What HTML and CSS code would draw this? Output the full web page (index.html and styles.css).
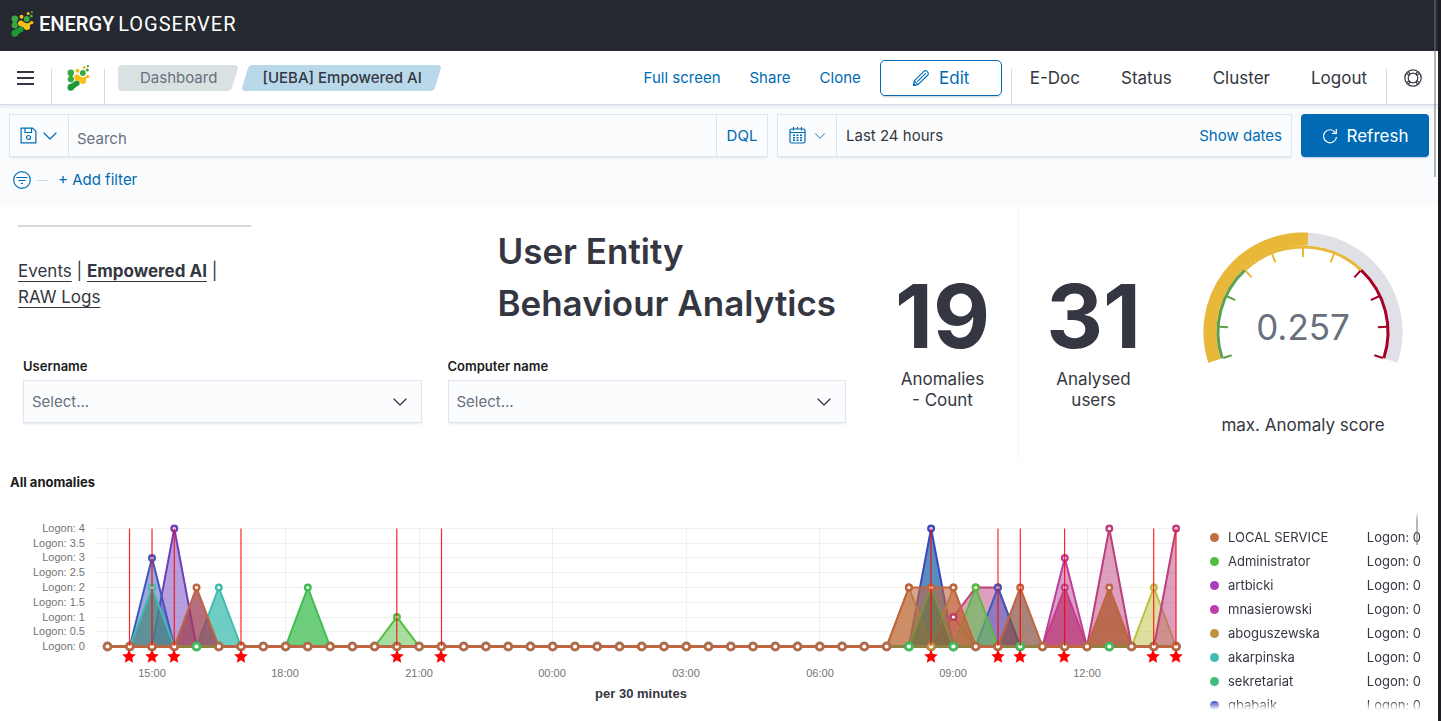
FILE: index.html
```html
<!DOCTYPE html>
<html lang="en">
<head>
<meta charset="utf-8">
<meta name="viewport" content="width=device-width, initial-scale=1">
<title>[UEBA] Empowered AI</title>
<link rel="stylesheet" href="styles.css">
</head>
<body>
<svg class="defs" aria-hidden="true">
  <symbol id="logo" viewBox="0 0 22 26">
    <g fill="#3aa845"><circle cx="3.3" cy="7.8" r="3.3"/><circle cx="3.3" cy="14.3" r="3.1"/><path d="M1.5 9h3.6v5H1.5z"/><circle cx="15.3" cy="8" r="2.9"/><circle cx="19.8" cy="5" r="1.6"/><circle cx="20.4" cy="1.2" r="1.1"/></g>
    <g fill="#1e9a35"><circle cx="3.3" cy="22.4" r="3.3"/><circle cx="9.3" cy="18.2" r="2.8"/><path d="M2 19.6l6-3.6 2.8 4.6-5.8 4z"/></g>
    <g fill="#f6c217"><circle cx="10" cy="5.7" r="2"/><circle cx="16.7" cy="2.4" r="1.5"/><circle cx="9.4" cy="12.4" r="2.8"/><circle cx="15.4" cy="15.7" r="3.2"/><circle cx="20.2" cy="11.6" r="1.7"/><path d="M9 9.8l7 3-1 5.2-6.600-3.400zM15 13l5-2.500.8 2-4.500 3z"/></g>
  </symbol>
  <symbol id="chevron" viewBox="0 0 16 16"><path d="M2 5l6 6 6-6" fill="none" stroke="currentColor" stroke-width="1.200" stroke-linecap="round" stroke-linejoin="round"/></symbol>
</svg>

<div class="page">
  <div class="page-scroll"></div>
  <header class="brand">
    <svg class="brand-icon"><use href="#logo"/></svg>
    <span class="brand-name"><b>ENERGY</b><span>LOGSERVER</span></span>
  </header>

  <nav class="nav">
    <button class="nav-cell" aria-label="Menu"><svg width="17" height="14" viewBox="0 0 17 14" stroke="#343741" stroke-width="2"><path d="M0 1h17M0 7h17M0 13h17"/></svg></button>
    <i class="sep"></i>
    <a class="nav-cell nav-home" href="#" aria-label="Home"><svg class="brand-icon"><use href="#logo"/></svg></a>
    <i class="sep"></i>
    <div class="crumbs">
      <a class="crumb crumb-first" href="#">Dashboard</a>
      <span class="crumb crumb-last">[UEBA] Empowered AI</span>
    </div>
    <div class="actions">
      <a href="#">Full screen</a><a href="#">Share</a><a href="#">Clone</a>
    </div>
    <button class="edit"><svg width="18" height="18" viewBox="0 0 18 18" fill="none" stroke="currentColor" stroke-width="1.100" stroke-linejoin="round"><path d="M1.500 16.500l.8-4.600L12 2.200a1.900 1.900 0 0 1 2.700 0l1.100 1.100a1.900 1.900 0 0 1 0 2.700L6.100 15.700zM2.300 11.900l3.800 3.800M5.300 12.700l8.500-8.500"/><path d="M1.500 16.500l.3-2 1.700 1.700z" fill="currentColor"/></svg>Edit</button>
    <i class="sep"></i>
    <div class="links">
      <a href="#">E-Doc</a><a href="#">Status</a><a href="#">Cluster</a><a href="#">Logout</a>
    </div>
    <i class="sep"></i>
    <button class="nav-cell" aria-label="Help"><svg width="18" height="18" viewBox="0 0 18 18" fill="none" stroke="#343741" stroke-width="1.200"><circle cx="9" cy="9" r="8.200"/><circle cx="9" cy="9" r="4.800"/><path d="M2.600 4.400l2.600 1.800M4.400 2.600l1.800 2.600M15.400 4.400l-2.600 1.800M13.600 2.600l-1.800 2.600M2.600 13.600l2.600-1.800M4.400 15.400l1.800-2.600M15.400 13.600l-2.600-1.800M13.600 15.400l-1.800-2.600"/></svg></button>
  </nav>

  <section class="query">
    <div class="query-bar">
      <div class="search-box">
        <button class="pick" aria-label="Saved queries"><svg width="17" height="17" viewBox="0 0 17 17" fill="none" stroke="currentColor" stroke-width="1.200"><path d="M1.100 1.100h11.500l3.300 3.300v11.500H1.100zM5 1.100v4.400h6.500V1.100"/><circle cx="8.500" cy="10.500" r="2"/></svg><svg width="16" height="16"><use href="#chevron"/></svg></button>
        <input type="text" placeholder="Search" aria-label="Search">
        <button class="dql">DQL</button>
      </div>
      <div class="date-box">
        <button class="pick" aria-label="Date quick select"><svg width="17" height="17" viewBox="0 0 17 17" fill="none" stroke="currentColor" stroke-width="1.200"><rect x="1" y="2" width="15" height="14" rx="1.500"/><path d="M1 5.500h15M4.500 0v3.500M8.500 0v2M12.500 0v3.500"/><path d="M4 8.300h9M4 10.800h9M4 13.300h9" stroke-width="1.400" stroke-dasharray="2 1.500"/></svg><svg width="12" height="12"><use href="#chevron"/></svg></button>
        <span class="range">Last 24 hours</span>
        <a href="#">Show dates</a>
      </div>
      <button class="refresh"><svg width="16" height="16" viewBox="0 0 16 16" fill="none" stroke="currentColor" stroke-width="1.200"><path d="M13.200 4.300A6.500 6.500 0 1 0 14.500 9M14.300 1v4.300H10"/></svg>Refresh</button>
    </div>
    <div class="filters">
      <button class="filter-icon" aria-label="Filter options"><svg width="18" height="18" viewBox="0 0 18 18" fill="none" stroke="currentColor" stroke-width="1.200"><circle cx="9" cy="9" r="8.300"/><path d="M3.500 6.500h11M5.500 9.500h7M8 12.500h2"/></svg></button>
      <i class="dash"></i>
      <a href="#">+ Add filter</a>
    </div>
  </section>

  <main>
    <section class="overview">
      <div class="left">
        <div class="intro">
          <p class="tabs"><a href="#">Events</a> | <a href="#"><b>Empowered AI</b></a> | <a href="#">RAW Logs</a></p>
          <h1>User Entity<br>Behaviour Analytics</h1>
        </div>
        <div class="controls">
          <div class="field">
            <label for="user">Username</label>
            <div class="select"><select id="user"><option>Select...</option></select><svg width="16" height="16"><use href="#chevron"/></svg></div>
          </div>
          <div class="field">
            <label for="computer">Computer name</label>
            <div class="select"><select id="computer"><option>Select...</option></select><svg width="16" height="16"><use href="#chevron"/></svg></div>
          </div>
        </div>
      </div>
      <div class="metric"><strong>19</strong><span>Anomalies<br>- Count</span></div>
      <div class="metric"><strong>31</strong><span>Analysed<br>users</span></div>
      <div class="gauge">
        <svg width="200" height="134" viewBox="0 0 200 134" fill="none">
          <path d="M11.550 128.740A93 93 0 1 1 188.450 128.740" stroke="#e0e1e6" stroke-width="13"/>
          <path d="M11.550 128.740A93 93 0 0 1 104.870 7.130" stroke="#e9b838" stroke-width="13"/>
          <path d="M19.160 126.270A85 85 0 0 1 41.800 38.040" stroke="#5fa04e" stroke-width="3"/>
          <path d="M41.800 38.040A85 85 0 0 1 158.200 38.040" stroke="#e9b838" stroke-width="3"/>
          <path d="M158.200 38.040A85 85 0 0 1 180.840 126.270" stroke="#a50026" stroke-width="3"/>
          <g stroke-width="2">
            <g stroke="#5fa04e"><path d="M16 100h9" transform="rotate(-18 100 100)"/><path d="M16 100h9" transform="rotate(3.600 100 100)"/><path d="M16 100h9" transform="rotate(25.200 100 100)"/></g>
            <g stroke="#e9b838"><path d="M16 100h9" transform="rotate(46.800 100 100)"/><path d="M16 100h9" transform="rotate(68.400 100 100)"/><path d="M16 100h9" transform="rotate(90 100 100)"/><path d="M16 100h9" transform="rotate(111.600 100 100)"/></g>
            <g stroke="#a50026"><path d="M16 100h9" transform="rotate(133.200 100 100)"/><path d="M16 100h9" transform="rotate(154.800 100 100)"/><path d="M16 100h9" transform="rotate(176.400 100 100)"/><path d="M16 100h9" transform="rotate(198 100 100)"/></g>
          </g>
          <text x="100" y="108" class="gauge-value">0.257</text>
        </svg>
        <span>max. Anomaly score</span>
      </div>
    </section>

    <h2>All anomalies</h2>
    <section class="anomalies">
      <svg class="chart" viewBox="0 0 1200 206" role="img" aria-label="All anomalies per 30 minutes">
        <defs>
          <marker id="dot" viewBox="0 0 10 10" markerWidth="10" markerHeight="10" refX="5" refY="5" markerUnits="userSpaceOnUse"><circle cx="5" cy="5" r="2.800" fill="#fff" stroke="context-stroke" stroke-width="2.400"/></marker>
          <marker id="base" viewBox="0 0 12 12" markerWidth="12" markerHeight="12" refX="6" refY="6" markerUnits="userSpaceOnUse"><circle cx="6" cy="6" r="4.900" fill="#7d8060"/><circle cx="6" cy="6" r="3.200" fill="#fff" stroke="#bf6540" stroke-width="2.300"/></marker>
          <path id="star" d="M0-7l2 4.500 4.800.5-3.600 3.300 1 4.900L0 3.700l-4.200 2.500 1-4.900L-6.800-2l4.800-.5z" fill="#f00"/>
          <g id="green"><circle r="4.800" fill="#3fbe5f"/><circle r="2.100" fill="#fff"/></g>
        </defs>
        <g stroke="#f0f0f0" fill="none">
          <path d="M97 23.500H1176M97 38.500H1176M97 52.500H1176M97 67.500H1176M97 82.500H1176M97 97.500H1176M97 112.500H1176M97 126.500H1176M97 141.500H1176"/>
          <path d="M107.500 23V153M152.500 23V153M285.500 23V153M419.500 23V153M552.500 23V153M686.500 23V153M819.500 23V153M953.500 23V153M1087.500 23V153"/>
        </g>
        <g class="series" fill-opacity=".5">
          <polyline points="152,141.500 174.300,23.500 196.500,141.500" stroke="#6f3fbe" fill="#6f3fbe"/>
          <polyline points="129.800,141.500 152,53 174.300,141.500" stroke="#3f57be" fill="#3f57be"/>
          <polyline points="129.800,141.500 152,82.500 174.300,141.500" stroke="#3fbeaf" fill="#4a8880" fill-opacity=".75"/>
          <polyline points="196.500,141.500 218.800,82.500 241,141.500" stroke="#3fbeaf" fill="#3fbeaf" fill-opacity=".75"/>
          <polyline points="174.300,141.500 196.500,82.500 218.800,141.500" stroke="#bf6540" fill="#9f3f55" fill-opacity=".75"/>
          <polyline points="285.600,141.500 307.800,82.500 330.100,141.500" stroke="#3fbe52" fill="#3fbe52" fill-opacity=".75"/>
          <polyline points="374.700,141.500 396.900,112 419.200,141.500" stroke="#52be3f" fill="#52be3f"/>
          <polyline points="908.900,141.500 931.100,23.500 953.400,141.500" stroke="#3f46be" fill="#2067a8" fill-opacity=".75"/>
          <polyline points="931.100,141.500 953.400,112 975.700,82.500 997.900,82.500 1020.200,141.500" stroke="#be3f7d" fill="#be3f7d"/>
          <polyline points="953.400,112 975.700,141.500" stroke="#be3f5f" fill="none"/>
          <polyline points="975.700,141.500 997.900,82.500 1020.200,141.500" stroke="#3f57be" fill="#3f57be"/>
          <polyline points="953.400,141.500 975.700,82.500 997.900,141.500" stroke="#52be3f" fill="#66be55" fill-opacity=".65"/>
          <polyline points="886.600,141.500 908.900,82.500 931.100,141.500" stroke="#be983f" fill="#be983f"/>
          <polyline points="931.100,141.500 953.400,82.500 975.700,141.500" stroke="#be983f" fill="#be653f"/>
          <polyline points="886.600,141.500 908.900,82.500 931.100,82.500 953.400,82.500 975.700,141.500" stroke="#bf6540" fill="#bf6540" fill-opacity=".6"/>
          <polyline points="908.900,141.500 931.100,82.500 953.400,141.500" stroke="#7f903f" fill="#55723f"/>
          <circle cx="908.900" cy="82.500" r="2.800" fill="#fff" fill-opacity="1" stroke="#bf6540" stroke-width="2.400"/><circle cx="931.100" cy="82.500" r="2.800" fill="#fff" fill-opacity="1" stroke="#bf6540" stroke-width="2.400"/>
          <circle cx="953.400" cy="112" r="2.800" fill="#fff" fill-opacity="1" stroke="#be3f5f" stroke-width="2.400"/>
          <polyline points="997.900,141.500 1020.200,82.500 1042.500,141.500" stroke="#bf6540" fill="#835040" fill-opacity=".7"/>
          <polyline points="1042.500,141.500 1064.800,53 1087,141.500" stroke="#be3f98" fill="#be3f98"/>
          <polyline points="1042.500,141.500 1064.800,82.500 1087,141.500" stroke="#be3f8a" fill="#b8306d" fill-opacity=".7"/>
          <polyline points="1087,141.500 1109.300,23.500 1131.600,141.500" stroke="#be3f7d" fill="#be3f7d"/>
          <polyline points="1087,141.500 1109.300,82.500 1131.600,141.500" stroke="#bf6540" fill="#b05c36" fill-opacity=".8"/>
          <polyline points="1131.600,141.500 1153.900,82.500 1176.100,141.500" stroke="#bebe3f" fill="#bebe3f"/>
          <polyline class="rising" points="1153.900,141.500 1176.100,23.500" stroke="#be3f7d" fill="none"/>
          <polygon points="1153.900,141.500 1176.100,23.500 1176.100,141.500" fill="#be3f7d"/>
        </g>
        <polyline class="baseline" points="107.500,141.500 129.800,141.500 152,141.500 174.300,141.500 196.500,141.500 218.800,141.500 241,141.500 263.300,141.500 285.600,141.500 307.800,141.500 330.100,141.500 352.400,141.500 374.600,141.500 396.900,141.500 419.100,141.500 441.400,141.500 463.700,141.500 485.900,141.500 508.200,141.500 530.400,141.500 552.700,141.500 575,141.500 597.200,141.500 619.500,141.500 641.700,141.500 664,141.500 686.300,141.500 708.500,141.500 730.800,141.500 753,141.500 775.300,141.500 797.600,141.500 819.800,141.500 842.100,141.500 864.300,141.500 886.600,141.500 908.900,141.500 931.100,141.500 953.400,141.500 975.700,141.500 997.900,141.500 1020.200,141.500 1042.500,141.500 1064.700,141.500 1087,141.500 1109.300,141.500 1131.500,141.500 1153.800,141.500 1176.100,141.500"/>
        <path d="M179 141.500h35M891 141.500h35M936 141.500h35M1003 141.500h35M1092 141.500h35" stroke="#7c8d3f" stroke-width="2"/>
        <use href="#green" x="196.500" y="141.500"/><use href="#green" x="908.900" y="141.500"/><use href="#green" x="953.400" y="141.500"/><use href="#green" x="1020.200" y="141.500"/><use href="#green" x="1109.300" y="141.500"/>
        <circle cx="931.100" cy="141.500" r="3" fill="#fff" stroke="#be983f" stroke-width="2"/>
        <path d="M129.500 23.500V141M152 23.500V141M174.300 23.500V141M241 23.500V141M396.800 23.500V141M441.500 23.500V141M931 23.500V141M998 23.500V141M1020.300 23.500V141M1064.600 23.500V141M1153.700 23.500V141M1176 23.500V141" stroke="#f00" stroke-opacity=".85" stroke-width="1.200"/>
        <use href="#star" x="129" y="151.500"/><use href="#star" x="152" y="151.500"/><use href="#star" x="174" y="151.500"/><use href="#star" x="241" y="151.500"/><use href="#star" x="397" y="151.500"/><use href="#star" x="441" y="151.500"/><use href="#star" x="931" y="151.500"/><use href="#star" x="998" y="151.500"/><use href="#star" x="1020" y="151.500"/><use href="#star" x="1064" y="151.500"/><use href="#star" x="1153" y="151.500"/><use href="#star" x="1176" y="151.500"/>
        <g class="y-labels">
          <text x="85" y="27">Logon: 4</text><text x="85" y="42">Logon: 3.5</text><text x="85" y="56">Logon: 3</text><text x="85" y="71">Logon: 2.5</text><text x="85" y="86">Logon: 2</text><text x="85" y="101">Logon: 1.5</text><text x="85" y="116">Logon: 1</text><text x="85" y="130">Logon: 0.5</text><text x="85" y="145">Logon: 0</text>
        </g>
        <g class="x-labels">
          <text x="152" y="172">15:00</text><text x="285" y="172">18:00</text><text x="419" y="172">21:00</text><text x="552" y="172">00:00</text><text x="686" y="172">03:00</text><text x="820" y="172">06:00</text><text x="953" y="172">09:00</text><text x="1087" y="172">12:00</text>
        </g>
        <text class="x-title" x="641" y="193">per 30 minutes</text>
      </svg>
      <ul class="legend">
        <li><i class="c1"></i><span>LOCAL SERVICE</span><span>Logon: 0</span></li>
        <li><i class="c2"></i><span>Administrator</span><span>Logon: 0</span></li>
        <li><i class="c3"></i><span>artbicki</span><span>Logon: 0</span></li>
        <li><i class="c4"></i><span>mnasierowski</span><span>Logon: 0</span></li>
        <li><i class="c5"></i><span>aboguszewska</span><span>Logon: 0</span></li>
        <li><i class="c6"></i><span>akarpinska</span><span>Logon: 0</span></li>
        <li><i class="c7"></i><span>sekretariat</span><span>Logon: 0</span></li>
        <li><i class="c8"></i><span>gbabaik</span><span>Logon: 0</span></li>
      </ul>
    </section>
  </main>
</div>
</body>
</html>
```

FILE: styles.css
```css
* { box-sizing: border-box; }
body {
  margin: 0;
  background: #fff;
  color: #343741;
  font: 15px/20px Inter, "Liberation Sans", sans-serif;
}
a { color: #006bb4; text-decoration: none; }
button, input, select { font: inherit; color: inherit; background: none; border: 0; margin: 0; padding: 0; border-radius: 0; }
button svg { flex: none; }
.defs { position: absolute; width: 0; height: 0; }
.page { position: relative; min-height: 100vh; border-right: 3px solid #1d1e24; }
.page-scroll { position: absolute; z-index: 2; top: 0; right: 2px; width: 2px; height: 177px; background: rgba(105, 112, 125, .5); }

.brand { display: flex; align-items: center; gap: 5px; height: 51px; padding: 0 11px 3px; background: #25282f; color: #fff; }
.brand-icon { display: block; width: 23px; height: 26px; }
.brand-name { display: flex; gap: 4px; font: 20px/24px Roboto, sans-serif; }
.brand-name b { font-weight: 500; }
.brand-name span { letter-spacing: 1px; }

.nav { display: flex; align-items: center; height: 54px; border-bottom: 1px solid #d3dae6; box-shadow: 0 2px 3px rgba(152, 162, 179, .2); position: relative; }
.nav-cell { display: flex; align-items: center; justify-content: center; width: 51px; height: 100%; flex: none; }
.nav-home { width: 52px; }
.sep { width: 1px; height: 35px; align-self: flex-end; background: #d3dae6; flex: none; }
.crumbs { display: flex; gap: 2px; margin-left: 13px; }
.crumb { position: relative; z-index: 0; padding: 3px 22px; height: 26px; line-height: 20px; color: #69707d; white-space: nowrap; }
.crumb::before, .crumb-first::after { content: ""; position: absolute; z-index: -1; inset: 0 4px; border-radius: 4px; background: #d9e1e2; transform: skewX(-17deg); }
.crumb-first::after { inset: 0 20px 0 0; transform: none; }
.crumb-last { padding: 3px 21px; color: #343741; font-weight: 500; }
.crumb-last::before { background: #b9d9eb; }
.actions { display: flex; gap: 29px; margin-left: auto; white-space: nowrap; }
.edit { display: flex; align-items: center; justify-content: center; gap: 9px; width: 122px; height: 36px; margin: 0 9px 0 19px; border: 1px solid #006bb4; border-radius: 5px; color: #006bb4; font-size: 17px; box-shadow: 0 2px 2px -1px rgba(54, 97, 126, .3); }
.links { display: flex; gap: 41px; padding: 0 19px 0 18px; font-size: 17px; }
.links a { color: #343741; }

.query { padding: 9px 9px 0; height: 101px; background: #fafbfd; }
.query-bar { display: grid; grid-template-columns: 759fr 515fr 128px; gap: 9px; height: 43px; }
.search-box, .date-box { display: flex; align-items: center; min-width: 0; border: 1px solid #e0e4ee; background: #fbfcfd; box-shadow: 0 2px 2px -1px rgba(152, 162, 179, .25); }
.date-box { padding-right: 9px; }
.pick { display: flex; align-items: center; justify-content: center; gap: 5px; width: 59px; height: 100%; flex: none; border-right: 1px solid #e0e4ee; color: #006bb4; }
.date-box .pick { gap: 8px; }
.search-box input { flex: 1; min-width: 0; height: 100%; padding: 6px 8px 0; outline: 0; }
.search-box input::placeholder { color: #69707d; opacity: 1; }
.dql { width: 51px; height: 100%; border-left: 1px solid #e0e4ee; color: #006bb4; }
.range { flex: 1; padding-left: 9px; }
.refresh { display: flex; align-items: center; justify-content: center; gap: 9px; border-radius: 4px; background: #006bb4; color: #fff; font-size: 17px; box-shadow: 0 2px 2px -1px rgba(54, 97, 126, .3); }
.filters { display: flex; align-items: center; height: 46px; padding-left: 4px; }
.filter-icon { display: flex; color: #006bb4; }
.dash { width: 11px; height: 1px; margin: 0 10px 0 6px; background: #d3dae6; }

.overview { display: grid; grid-template-columns: 867fr 151fr 150fr 270fr; height: 256px; }
.intro { display: grid; grid-template-columns: 498fr 370fr; height: 150px; }
.tabs { width: 233px; margin: 19px 0 0 18px; padding-top: 31px; border-top: 2px solid #d8d8d8; font-size: 17px; line-height: 26px; }
.tabs a { color: inherit; text-decoration: underline; text-underline-offset: 4px; }
h1 { margin: 19px 0 0; font-size: 35px; line-height: 52px; font-weight: 600; white-space: nowrap; }
.controls { display: grid; grid-template-columns: 1fr 1fr; gap: 26px; padding: 0 21px 0 23px; }
label, h2 { display: block; color: #1a1c21; font-size: 13px; line-height: 20px; font-weight: 600; }
.select { position: relative; margin-top: 4px; }
.select select { appearance: none; display: block; width: 100%; height: 43px; padding: 0 40px 0 8px; border: 1px solid #e0e4ee; background: #fbfcfd; color: #69707d; box-shadow: 0 2px 2px -1px rgba(152, 162, 179, .25); }
.select svg { position: absolute; right: 14px; top: 14px; pointer-events: none; }
.metric { display: flex; flex-direction: column; align-items: center; padding-top: 66px; font-size: 17px; line-height: 21px; text-align: center; }
.metric + .metric { border-left: 1px solid #f5f7fa; }
.metric strong { font-size: 88px; line-height: 88px; font-weight: 700; margin-bottom: 9px; }
.gauge { display: flex; flex-direction: column; align-items: center; padding-top: 26px; font-size: 17px; line-height: 21px; }
.gauge span { margin-top: 49px; }
.gauge-value { font-size: 35px; fill: #69707d; text-anchor: middle; }

h2 { margin: 10px 0 13px 10px; font-weight: 700; }
.anomalies { display: grid; grid-template-columns: 1200fr 238fr; align-items: start; }
.chart { display: block; width: 100%; font-family: "Liberation Sans", Arial, sans-serif; }
.series polyline { stroke-width: 2; marker-mid: url(#dot); }
.series .rising { marker-end: url(#dot); }
.baseline { fill: none; stroke: #bf6540; stroke-width: 3; marker: url(#base); }
.y-labels, .x-labels { font-size: 11px; fill: #737373; }
.y-labels { text-anchor: end; }
.x-labels { text-anchor: middle; }
.x-title { font-size: 13px; font-weight: 700; fill: #343741; text-anchor: middle; }
.legend { position: relative; list-style: none; margin: 7px 17px 0 0; padding: 13px 0 0 10px; height: 198px; overflow: hidden; font-size: 13px; line-height: 24px; mask-image: linear-gradient(to bottom, transparent, #000 8px, #000 calc(100% - 9px), transparent); }
.legend::after { content: ""; position: absolute; right: 3px; top: 0; width: 2px; height: 33px; background: rgba(105, 112, 125, .5); }
.legend li { display: flex; align-items: center; }
.legend i { width: 9px; height: 9px; margin-right: 9px; border-radius: 50%; }
.legend span:last-child { margin-left: auto; }
.c1 { background: #c06f40; }
.c2 { background: #51be3f; }
.c3 { background: #a93fbe; }
.c4 { background: #be3fa9; }
.c5 { background: #be933f; }
.c6 { background: #3fbeaf; }
.c7 { background: #3fbe7d; }
.c8 { background: #3f46be; }
```
